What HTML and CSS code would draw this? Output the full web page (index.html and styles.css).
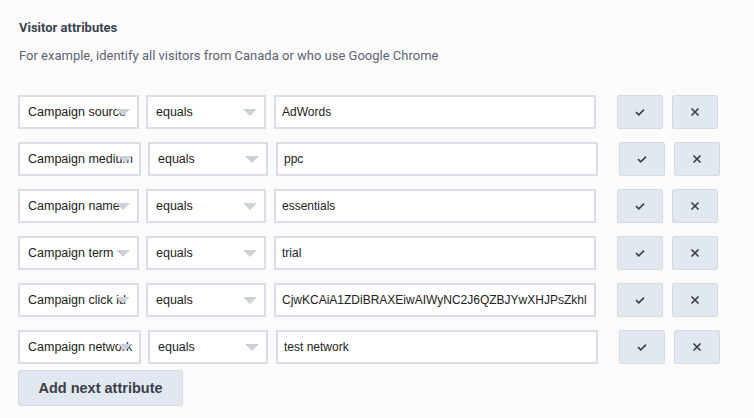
FILE: index.html
```html
<!DOCTYPE html>
<html lang="en">

<head>
  <meta charset="UTF-8">
  <title>Visitor attributes</title>
  <link rel="stylesheet" href="styles.css">
</head>

<body>
  <section class="attributes">
    <h3 class="title">Visitor attributes</h3>
    <p class="hint">For example, identify all visitors from Canada or who use Google Chrome</p>

    <div class="rules">
      <div class="rule">
        <div class="select field">Campaign source</div>
        <div class="select op">equals</div>
        <input class="value" type="text" value="AdWords">
        <button class="icon-btn ok"><svg viewBox="0 0 12 12"><path d="M2 6.2l2.8 2.6L10 3.6"/></svg></button>
        <button class="icon-btn"><svg viewBox="0 0 12 12"><path d="M2.5 2.5l7 7M9.5 2.5l-7 7"/></svg></button>
      </div>
      <div class="rule">
        <div class="select field wide">Campaign medium</div>
        <div class="select op">equals</div>
        <input class="value" type="text" value="ppc">
        <button class="icon-btn ok"><svg viewBox="0 0 12 12"><path d="M2 6.2l2.8 2.6L10 3.6"/></svg></button>
        <button class="icon-btn"><svg viewBox="0 0 12 12"><path d="M2.5 2.5l7 7M9.5 2.5l-7 7"/></svg></button>
      </div>
      <div class="rule">
        <div class="select field">Campaign name</div>
        <div class="select op">equals</div>
        <input class="value" type="text" value="essentials">
        <button class="icon-btn ok"><svg viewBox="0 0 12 12"><path d="M2 6.2l2.8 2.6L10 3.6"/></svg></button>
        <button class="icon-btn"><svg viewBox="0 0 12 12"><path d="M2.5 2.5l7 7M9.5 2.5l-7 7"/></svg></button>
      </div>
      <div class="rule">
        <div class="select field">Campaign term</div>
        <div class="select op">equals</div>
        <input class="value" type="text" value="trial">
        <button class="icon-btn ok"><svg viewBox="0 0 12 12"><path d="M2 6.2l2.8 2.6L10 3.6"/></svg></button>
        <button class="icon-btn"><svg viewBox="0 0 12 12"><path d="M2.5 2.5l7 7M9.5 2.5l-7 7"/></svg></button>
      </div>
      <div class="rule">
        <div class="select field">Campaign click id</div>
        <div class="select op">equals</div>
        <input class="value" type="text" value="CjwKCAiA1ZDiBRAXEiwAIWyNC2J6QZBJYwXHJPsZkhl">
        <button class="icon-btn ok"><svg viewBox="0 0 12 12"><path d="M2 6.2l2.8 2.6L10 3.6"/></svg></button>
        <button class="icon-btn"><svg viewBox="0 0 12 12"><path d="M2.5 2.5l7 7M9.5 2.5l-7 7"/></svg></button>
      </div>
      <div class="rule">
        <div class="select field wide">Campaign network</div>
        <div class="select op">equals</div>
        <input class="value" type="text" value="test network">
        <button class="icon-btn ok"><svg viewBox="0 0 12 12"><path d="M2 6.2l2.8 2.6L10 3.6"/></svg></button>
        <button class="icon-btn"><svg viewBox="0 0 12 12"><path d="M2.5 2.5l7 7M9.5 2.5l-7 7"/></svg></button>
      </div>
    </div>

    <button class="add-btn">Add next attribute</button>
  </section>
</body>

</html>
```

FILE: styles.css
```css
body {
  margin: 0;
  background-color: #fbfbfc;
  font-family: Roboto, Arial, sans-serif;
}

.attributes {
  padding: 20px 18px 0 18px;
}

.title {
  margin: 0 0 0 1px;
  font-size: 13px;
  font-weight: 700;
  color: #3c434d;
  line-height: 16px;
}

.hint {
  margin: 12px 0 0 1px;
  font-size: 13px;
  color: #5b6470;
  line-height: 16px;
}

.rules {
  display: flex;
  flex-direction: column;
  gap: 13px;
  margin-top: 31px;
}

.rule {
  display: flex;
  align-items: center;
  height: 34px;
}

.select {
  position: relative;
  box-sizing: border-box;
  height: 34px;
  padding: 0 8px;
  border: 2px solid #d7dee5;
  background-color: #fff;
  font-family: "Liberation Sans", Arial, sans-serif;
  font-size: 12.5px;
  line-height: 30px;
  color: #222;
  white-space: nowrap;
  overflow: hidden;
}

.select::after {
  content: "";
  position: absolute;
  right: 7px;
  top: 12px;
  border-left: 7px solid transparent;
  border-right: 7px solid transparent;
  border-top: 7px solid #c9d1da;
}

.field {
  width: 121px;
}

.field.wide {
  width: 123px;
}

.op {
  width: 120px;
  margin-left: 7px;
}

.value {
  box-sizing: border-box;
  width: 322px;
  height: 34px;
  margin: 0 0 0 8px;
  padding: 0 6px;
  border: 2px solid #d7dee5;
  background-color: #fff;
  font-family: "Liberation Sans", Arial, sans-serif;
  font-size: 12px;
  color: #222;
  outline: none;
}

.icon-btn {
  box-sizing: border-box;
  width: 46px;
  height: 34px;
  margin-left: 9px;
  padding: 0;
  border: 1px solid #d3dae2;
  border-radius: 2px;
  background-color: #e2e8f0;
  display: flex;
  align-items: center;
  justify-content: center;
}

.icon-btn.ok {
  margin-left: 21px;
}

.icon-btn svg {
  width: 12px;
  height: 12px;
  fill: none;
  stroke: #3c4148;
  stroke-width: 1.7;
}

.add-btn {
  box-sizing: border-box;
  width: 165px;
  height: 36px;
  margin-top: 6px;
  border: 1px solid #d3dae2;
  border-radius: 2px;
  background-color: #e2e8f0;
  font-family: "Liberation Sans", Arial, sans-serif;
  font-size: 14.5px;
  font-weight: 700;
  color: #3a3f47;
}
```
